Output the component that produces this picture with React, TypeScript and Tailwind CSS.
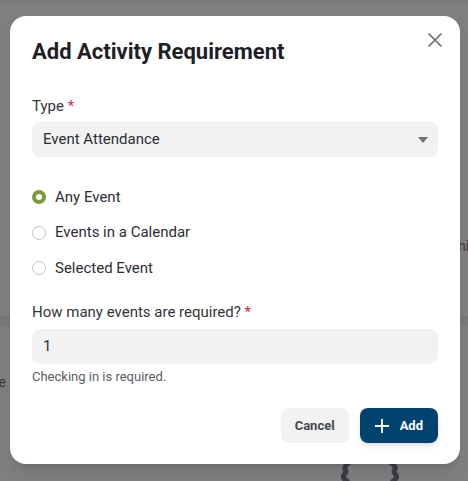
import React from "react";

export default function App() {
  return (
    <div
      className="relative w-[468px] h-[481px] overflow-hidden bg-[#7f7f7f]"
      style={{ fontFamily: "Roboto, 'Noto Sans', sans-serif" }}
    >
      {/* faint background content behind overlay */}
      <div className="absolute left-0 top-0 w-full h-[4px] bg-[#7a7a7a]" />
      <div className="absolute left-0 top-[316px] w-full h-[10px] bg-[#787878]" />
      <div className="absolute left-[-6px] top-[372px] text-[14px] text-[#3a3a3a]">re</div>
      <div className="absolute left-[458px] top-[236px] text-[14px] text-[#3a3a3a]">ni:</div>
      <svg className="absolute left-[335px] top-[460px]" width="70" height="21" viewBox="0 0 70 21">
        <path d="M15 2 Q9 6 10 9 Q12 12 9 15 Q7 18 12 21" stroke="#3b3b44" strokeWidth="5" fill="none" strokeLinecap="round" />
        <path d="M55 2 Q61 6 60 9 Q58 12 61 15 Q63 18 58 21" stroke="#3b3b44" strokeWidth="5" fill="none" strokeLinecap="round" />
      </svg>

      {/* dialog */}
      <div className="absolute left-[10px] top-[16px] w-[450px] h-[448px] bg-white rounded-[16px] px-[22px] pt-[22px] shadow-lg">
        <button className="absolute right-[13px] top-[12px] w-[24px] h-[24px] flex items-center justify-center">
          <svg width="14" height="14" viewBox="0 0 14 14">
            <path d="M1 1 L13 13 M13 1 L1 13" stroke="#6b6b78" strokeWidth="1.7" strokeLinecap="round" />
          </svg>
        </button>
        <h2 className="text-[22px] leading-[28px] font-bold text-[#1e1f26]">Add Activity Requirement</h2>

        <div className="mt-[30px] text-[15px] leading-[20px] text-[#33343c]">
          Type <span className="text-[#e11d2e]">*</span>
        </div>
        <div className="mt-[6px] h-[35px] rounded-[8px] bg-[#f2f2f2] flex items-center justify-between pl-[11px] pr-[10px]">
          <span className="text-[15px] text-[#2d2e36]">Event Attendance</span>
          <svg width="10" height="6" viewBox="0 0 10 6">
            <path d="M0 0 L10 0 L5 6 Z" fill="#6f6f76" />
          </svg>
        </div>

        <div className="mt-[30px] flex flex-col gap-[15.5px]">
          <label className="flex items-center gap-[9px] h-[20px]">
            <span className="w-[14px] h-[14px] rounded-full border-[4px] border-[#7b9b3b] bg-white" />
            <span className="text-[15px] text-[#2d2e36]">Any Event</span>
          </label>
          <label className="flex items-center gap-[9px] h-[20px]">
            <span className="w-[14px] h-[14px] rounded-full border border-[#c4c4c8] bg-white" />
            <span className="text-[15px] text-[#2d2e36]">Events in a Calendar</span>
          </label>
          <label className="flex items-center gap-[9px] h-[20px]">
            <span className="w-[14px] h-[14px] rounded-full border border-[#c4c4c8] bg-white" />
            <span className="text-[15px] text-[#2d2e36]">Selected Event</span>
          </label>
        </div>

        <div className="mt-[24px] text-[15px] leading-[20px] text-[#33343c]">
          How many events are required? <span className="text-[#e11d2e]">*</span>
        </div>
        <div className="mt-[7px] h-[35px] rounded-[8px] bg-[#f2f2f2] flex items-center pl-[11px]">
          <span className="text-[15px] text-[#2d2e36]">1</span>
        </div>
        <div className="mt-[5px] text-[13px] leading-[16px] text-[#5b5c66]">Checking in is required.</div>

        <div className="mt-[23px] flex justify-end gap-[11px]">
          <button className="h-[35px] px-[14px] rounded-[8px] bg-[#f2f2f3] text-[13px] font-bold text-[#45464f]">Cancel</button>
          <button className="h-[35px] pl-[14px] pr-[15px] rounded-[8px] bg-[#02426f] text-[13px] font-bold text-white flex items-center gap-[10px] shadow-md">
            <svg width="16" height="16" viewBox="0 0 16 16">
              <path d="M8 1 V15 M1 8 H15" stroke="white" strokeWidth="1.8" />
            </svg>
            Add
          </button>
        </div>
      </div>
    </div>
  );
}
